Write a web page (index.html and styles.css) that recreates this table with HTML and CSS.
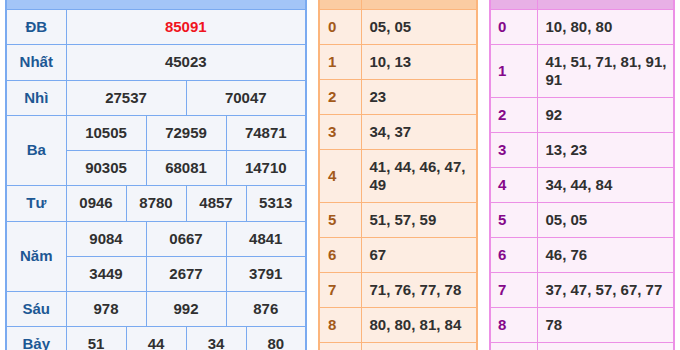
FILE: index.html
```html
<!DOCTYPE html>
<html lang="vi">
<head>
<meta charset="utf-8">
<title>KQXS</title>
<link rel="stylesheet" href="styles.css">
</head>
<body>
<div class="wrap">
  <table class="kq">
    <colgroup>
      <col class="c-label">
      <col><col><col><col><col><col><col><col><col><col><col><col>
    </colgroup>
    <tr class="head"><td colspan="13"></td></tr>
    <tr><th>ĐB</th><td colspan="12" class="db">85091</td></tr>
    <tr><th>Nhất</th><td colspan="12">45023</td></tr>
    <tr><th>Nhì</th><td colspan="6">27537</td><td colspan="6">70047</td></tr>
    <tr><th rowspan="2">Ba</th><td colspan="4">10505</td><td colspan="4">72959</td><td colspan="4">74871</td></tr>
    <tr><td colspan="4">90305</td><td colspan="4">68081</td><td colspan="4">14710</td></tr>
    <tr><th>Tư</th><td colspan="3">0946</td><td colspan="3">8780</td><td colspan="3">4857</td><td colspan="3">5313</td></tr>
    <tr><th rowspan="2">Năm</th><td colspan="4">9084</td><td colspan="4">0667</td><td colspan="4">4841</td></tr>
    <tr><td colspan="4">3449</td><td colspan="4">2677</td><td colspan="4">3791</td></tr>
    <tr><th>Sáu</th><td colspan="4">978</td><td colspan="4">992</td><td colspan="4">876</td></tr>
    <tr><th>Bảy</th><td colspan="3">51</td><td colspan="3">44</td><td colspan="3">34</td><td colspan="3">80</td></tr>
  </table>

  <table class="lt dau">
    <colgroup><col class="c-num"><col></colgroup>
    <tr class="head"><td></td><td></td></tr>
    <tr><th>0</th><td>05, 05</td></tr>
    <tr><th>1</th><td>10, 13</td></tr>
    <tr><th>2</th><td>23</td></tr>
    <tr><th>3</th><td>34, 37</td></tr>
    <tr><th>4</th><td>41, 44, 46, 47, 49</td></tr>
    <tr><th>5</th><td>51, 57, 59</td></tr>
    <tr><th>6</th><td>67</td></tr>
    <tr><th>7</th><td>71, 76, 77, 78</td></tr>
    <tr><th>8</th><td>80, 80, 81, 84</td></tr>
    <tr><th>9</th><td>91, 91, 92</td></tr>
  </table>

  <table class="lt duoi">
    <colgroup><col class="c-num"><col></colgroup>
    <tr class="head"><td></td><td></td></tr>
    <tr><th>0</th><td>10, 80, 80</td></tr>
    <tr><th>1</th><td>41, 51, 71, 81, 91, 91</td></tr>
    <tr><th>2</th><td>92</td></tr>
    <tr><th>3</th><td>13, 23</td></tr>
    <tr><th>4</th><td>34, 44, 84</td></tr>
    <tr><th>5</th><td>05, 05</td></tr>
    <tr><th>6</th><td>46, 76</td></tr>
    <tr><th>7</th><td>37, 47, 57, 67, 77</td></tr>
    <tr><th>8</th><td>78</td></tr>
    <tr><th>9</th><td>49, 59</td></tr>
  </table>
</div>
</body>
</html>
```

FILE: styles.css
```css
html, body {
  margin: 0;
  padding: 0;
  background: #ffffff;
  font-family: "Liberation Sans", Arial, sans-serif;
}

.wrap {
  display: flex;
  align-items: flex-start;
  gap: 11px;
  padding-left: 5px;
}

table {
  border-collapse: collapse;
  table-layout: fixed;
  font-size: 15px;
  font-weight: bold;
  line-height: 18px;
}

th, td {
  padding: 8px 0;
  border: 1px solid;
  white-space: normal;
}

tr.head td {
  height: 9px;
  padding: 0;
  border-top: none;
}

/* main results table */
.kq {
  width: 302px;
  border: 2px solid #7aaaf0;
  border-top: none;
  background: #f3f5fa;
  color: #303030;
}
.kq .c-label { width: 60px; }
.kq th, .kq td {
  border-color: #7aaaf0;
  text-align: center;
  padding-bottom: 8.25px;
}
.kq th { color: #1d5894; }
.kq tr.head td { background: #a3c5f7; padding: 0; }
.kq .db { color: #f0141e; }

/* loto tables */
.lt {
  color: #303030;
  border: 2px solid;
  border-top: none;
}
.lt th, .lt td {
  text-align: left;
  padding-left: 8px;
  padding-right: 6px;
}

.dau {
  width: 160px;
  background: #fdede2;
  border-color: #fcb57c;
}
.dau .c-num { width: 42px; }
.dau th, .dau td { border-color: #fcb57c; }
.dau th { color: #a35a1a; }
.dau tr.head td { background: #fbcca2; }

.duoi {
  width: 186px;
  background: #fcf0fa;
  border-color: #ec90e6;
}
.duoi .c-num { width: 47px; }
.duoi th, .duoi td { border-color: #ec90e6; }
.duoi th { color: #85088a; padding-left: 7px; }
.duoi tr.head td { background: #e8b0e6; }
```
